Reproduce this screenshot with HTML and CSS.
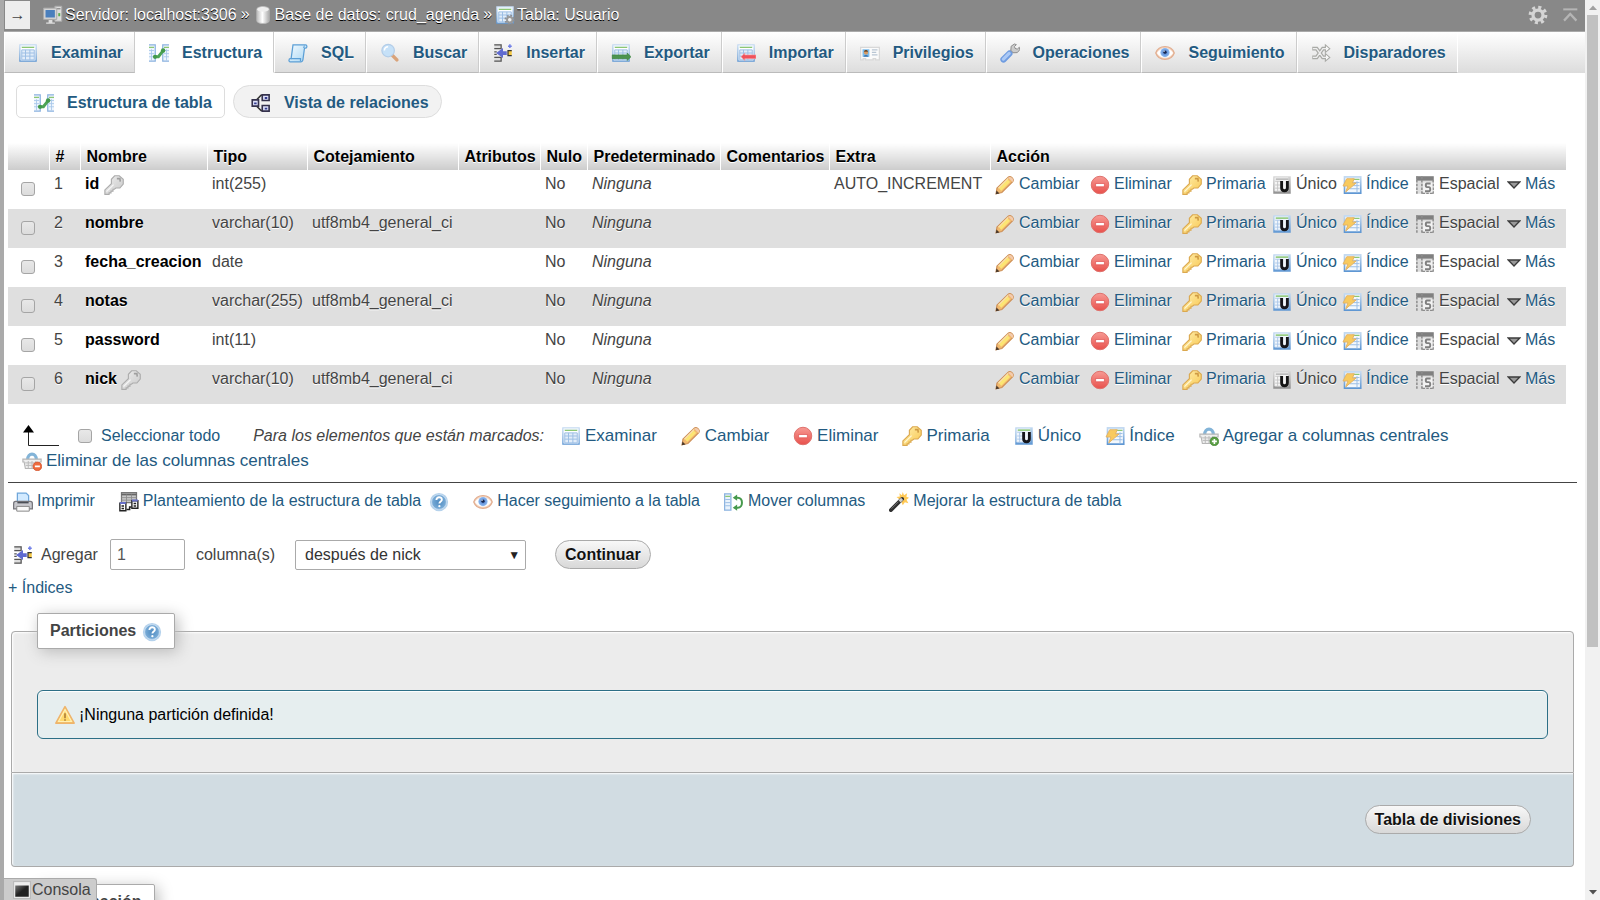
FILE: index.html
```html
<!DOCTYPE html>
<html lang="es">
<head>
<meta charset="utf-8">
<title>localhost / crud_agenda / Usuario</title>
<link rel="stylesheet" href="styles.css">
</head>
<body>
<svg class="sprite" aria-hidden="true">
  <defs>
    <linearGradient id="g-blue" x1="0" y1="0" x2="0" y2="1"><stop offset="0" stop-color="#c4daf1"/><stop offset="1" stop-color="#5f97d3"/></linearGradient>
    <linearGradient id="g-key" x1="0" y1="0" x2="1" y2="1"><stop offset="0" stop-color="#fff0b0"/><stop offset="1" stop-color="#f8c64e"/></linearGradient>
    <linearGradient id="g-red" x1="0" y1="0" x2="0" y2="1"><stop offset="0" stop-color="#f79a94"/><stop offset="1" stop-color="#e8504b"/></linearGradient>
    <linearGradient id="g-paper" x1="0" y1="0" x2="1" y2="1"><stop offset="0" stop-color="#f4fbff"/><stop offset="1" stop-color="#a9d6f3"/></linearGradient>
    <linearGradient id="g-db" x1="0" y1="0" x2="1" y2="0"><stop offset="0" stop-color="#bbb"/><stop offset=".45" stop-color="#fff"/><stop offset="1" stop-color="#aaa"/></linearGradient>
    <radialGradient id="g-iris"><stop offset="0" stop-color="#4a78c8"/><stop offset="1" stop-color="#8fbcf3"/></radialGradient>
    <radialGradient id="g-help"><stop offset="0" stop-color="#4f8cc2"/><stop offset="1" stop-color="#7badd8"/></radialGradient>
    <linearGradient id="g-con" x1="0" y1="0" x2="1" y2="1"><stop offset="0" stop-color="#777"/><stop offset=".5" stop-color="#222"/></linearGradient>
  </defs>
  <symbol id="table" viewBox="0 0 16 16"><rect x="1.5" y="1.5" width="13" height="13" fill="#fff" stroke="url(#g-blue)"/><path d="M2 2h12v1H2z" fill="#e9f2fb"/><path d="M3 3.500h10" stroke="#8cc774"/><path d="M3 5.500h10v8H3z" fill="#e2edf9"/><path d="M3 5.500h10v8H3zM3 8h10M3 10.500h10M6 5.500v8M9.500 5.500v8" fill="none" stroke="#9dbfe5" stroke-width=".8"/></symbol>
  <symbol id="structure" viewBox="0 0 16 16"><path d="M0 1h5v14H0zM11 1h5v14h-5z" fill="#eef5fd"/><path d="M0 1.500h5M11 1.500h5M5 1v14M11 1v14M0 14.500h5M11 14.500h5" stroke="#8db4e0" fill="none"/><path d="M0 3.500h4M12 3.500h4" stroke="#8cc774"/><path d="M0 6h4M0 8.500h4M0 11h4M12 6h4M12 8.500h4M12 11h4M2 5v9M14 5v9" stroke="#a9c8ea" stroke-width=".7"/><path d="M5 11h2.500l3.500-4.500" fill="none" stroke="#4da455" stroke-width="2.400"/><circle cx="4.800" cy="11" r="1.700" fill="#439a4b"/><circle cx="11.300" cy="6" r="1.800" fill="#439a4b"/></symbol>
  <symbol id="sql" viewBox="0 0 16 16"><path d="M4 1.500h10c1.500 0 1.500 2.500 0 2.500h-.8l-1.200 9c-.1 1-.8 2-1.500 2H1.500c-1 0-1-2.500.3-2.500H2.500z" fill="url(#g-paper)" stroke="#5b9fd6"/><path d="M2.500 12.500h7.500v2" fill="none" stroke="#5b9fd6"/><path d="M12.500 4l.6-2" stroke="#5b9fd6" stroke-width=".8"/></symbol>
  <symbol id="search" viewBox="0 0 16 16"><path d="M9.500 9.500l4 4" stroke="#d9a37a" stroke-width="2.800" stroke-linecap="round"/><circle cx="6.500" cy="6" r="5" fill="#c6e1f8" stroke="#b3cde8"/><path d="M3.500 6a3.200 3.200 0 0 1 3-3" stroke="#fff" stroke-width="1.200" fill="none"/></symbol>
  <symbol id="insert" viewBox="0 0 16 16"><path d="M1 1h6v3H1zM1 12h6v3H1z" fill="#ddd"/><path d="M1 1.500h6M1 4.500h6M1 11.500h6M1 14.500h6M6.500 1v3M6.500 12v3M1 7h2M1 9h2" stroke="#555"/><path d="M8 4v2.500h3v3H8V12L2.500 8z" fill="#5f6ad0"/><path d="M15 6h-3v4h3" fill="#f5c842" stroke="#333"/><path d="M13.500 1v3M12 2.500h3" stroke="#7180e8" stroke-width="1.200"/></symbol>
  <symbol id="export" viewBox="0 0 16 16"><use href="#table"/><path d="M1 9.500h12V8l3 3-3 3v-1.500H1z" fill="#4b9450" stroke="#39803f" stroke-width=".5"/></symbol>
  <symbol id="import" viewBox="0 0 16 16"><use href="#table"/><path d="M16 9.500H7V8l-3 3 3 3v-1.500h9z" fill="#f0525b" stroke="#f7a0a3" stroke-width=".5"/></symbol>
  <symbol id="card" viewBox="0 0 16 16"><path d="M.5 3.500h15v10h-3v-1h-2v1h-6v-1h-2v1h-2z" fill="#fbfbfb" stroke="#d8d8d8"/><path d="M2 5h5.500v6H2z" fill="#7dbdec"/><path d="M2.800 11c0-2 3.900-2 3.900 0z" fill="#3c78b5"/><circle cx="4.800" cy="7.600" r="1.700" fill="#d79a62"/><path d="M3.200 7c0-2 3.200-2 3.200 0z" fill="#6b4a2c"/><path d="M9.500 5.500h4.500M9.500 7.500h3.500M9.500 9.500h4.500" stroke="#b9c6d4" stroke-width=".9"/></symbol>
  <symbol id="wrench" viewBox="0 0 16 16"><path d="M7.500 8.500l3-3" stroke="#a5a5a5" stroke-width="3"/><path d="M11.500.8l-2.600 1.800-.2 3.200 1.700 2 3.400-.1 2-2.300-.3-2-1.700 1.500-1.800-.6-.4-1.500 1.500-1.500z" fill="#ccc" stroke="#8f8f8f" stroke-width=".8"/><path d="M2.800 13.200l4.700-4.700" stroke="#6f9ce0" stroke-width="5" stroke-linecap="round"/><path d="M2.700 12.900l4.600-4.600" stroke="#abc9f5" stroke-width="2.600" stroke-linecap="round"/></symbol>
  <symbol id="eye" viewBox="0 0 16 16"><path d="M.6 8C3 1.200 13 1.200 15.400 8 13 14.800 3 14.800.6 8z" fill="#f5d7c3" stroke="#e2ae90"/><path d="M1.500 8c3-5 10-5 13 0-3 5-10 5-13 0z" fill="#fff"/><circle cx="8" cy="7.600" r="3.700" fill="url(#g-iris)"/><circle cx="8" cy="7.300" r="1.300" fill="#162650"/><circle cx="7.300" cy="6.500" r=".5" fill="#fff"/></symbol>
  <symbol id="shuffle" viewBox="0 0 16 16"><path d="M1 4.500h3.500l5 7H13M1 11.500h3.500l5-7H13" fill="none" stroke="#a9aaa6" stroke-width="3"/><path d="M11.500 1.500L15 4.500l-3.500 3zM11.500 8.500l3.500 3-3.500 3z" fill="#fff" stroke="#a9aaa6" stroke-width=".9"/><path d="M1.500 4.500h3l5 7H13M1.500 11.500h3l5-7H13" fill="none" stroke="#eee" stroke-width="1.100"/></symbol>
  <symbol id="relations" viewBox="0 0 16 16"><path d="M4 6L8 1.800h2M4 10l4 4h2" stroke="#333" stroke-width="1.300" fill="none"/><g fill="#dfe2fb" stroke="#35324d" stroke-width="1.300"><path d="M1 5.500h5v5H1zM9 1.500h5.500v4.500H9zM9 10h5.500v4.500H9z"/></g><path d="M2.500 7.500h2V9h-2zM11 3.200h2v1.500h-2zM11 11.700h2v1.500h-2z" fill="#333b8c"/></symbol>
  <symbol id="key" viewBox="0 0 16 16"><path d="M8.500.6h3.700l3.200 2.800v3.800l-2.700 3.200H9.500l-1.200 1H7.200v1.500H5.600v1.400H4.100v1.200H.7v-3.600L5.900 7V3.400z" fill="url(#g-key)" stroke="#dba84f" stroke-width=".9"/><path d="M10.300 2.900l2.400-.1.300 2.500" fill="none" stroke="#cf9a43" stroke-width="1.300"/><path d="M2 13.300l5.700-5.600" stroke="#fff8d9" stroke-width=".9"/></symbol>
  <symbol id="pencil" viewBox="0 0 16 16"><path d="M.8 15l.8-4.500L10.600 1.700c1.700-1.500 5.200 1.500 3.600 3.600L5.500 14z" fill="#f2b96f" stroke="#cd9059" stroke-width=".9"/><path d="M4 11.500l7-7" stroke="#fce574" stroke-width="3"/><path d="M2.700 10.500l7.800-7.800" stroke="#fae3b5" stroke-width=".9"/><path d="M10.500 2l3.500 3.500c2-1.800-1.500-5.200-3.500-3.500z" fill="#f3cbae"/><path d="M.6 15.300l.6-3 2.400 2.400z" fill="#4b3a2c"/></symbol>
  <symbol id="drop" viewBox="0 0 16 16"><circle cx="8" cy="8" r="7" fill="url(#g-red)" stroke="#df716c" stroke-width=".8"/><path d="M4.500 6.800h7v2.600h-7z" fill="#fff" stroke="#d44" stroke-width=".5"/></symbol>
  <symbol id="unique" viewBox="0 0 16 16"><path d="M1 1h14v14H1z" fill="url(#g-blue)"/><path d="M2 2h11v11H2z" fill="#f0f6fc"/><path d="M3 3.300h10" stroke="#8cc774" stroke-width="1.200"/><path d="M2.500 5h5v8h-5M4.500 5v8M2.500 8h5M2.500 10.500h5" stroke="#a9c6e8" stroke-width=".7" fill="none"/><path d="M7.700 4.800v5.400c0 3.200 4.600 3.200 4.600 0V4.800" fill="none" stroke="#15151b" stroke-width="2.300"/></symbol>
  <symbol id="index" viewBox="0 0 16 16"><path d="M2 1.500h13v13H2z" fill="#f3f8fd" stroke="url(#g-blue)" stroke-width="1.300"/><path d="M8 3.500h6" stroke="#8cc774"/><path d="M9 6h5M8 8.500h6M6 11h8M12 5v9" stroke="#9dbfe5" stroke-width=".8"/><path d="M3.800 3l6 0-1.500 3.400h3L3 13.500l1.700-4.700H.8z" fill="#f8ca5e" stroke="#e4b467" stroke-width=".8"/></symbol>
  <symbol id="spatial" viewBox="0 0 16 16"><path d="M1 1h14v14H1z" fill="#ddd"/><path d="M1 1h14v3.500H1z" fill="#808080"/><path d="M1.500 1v14M5.500 1v14M14.500 4v11M6 14.500h9" stroke="#8c8c8c" stroke-width="1.200" stroke-dasharray="2 1"/><path d="M6.500 6h7.500v8H6.500z" fill="#f3f3f3"/><path d="M12.500 6.800H9.500c-1.200 0-1.200 2.900 0 2.900h1.500c1.600 0 1.600 3.300 0 3.300H8" fill="none" stroke="#808080" stroke-width="1.500"/></symbol>
  <symbol id="more" viewBox="0 0 14 16"><path d="M1.200 5h11.600L7 11z" fill="#999" stroke="#3c3c3c" stroke-width="1.300"/></symbol>
  <symbol id="basket" viewBox="0 0 16 16"><path d="M4.500 7C4.500 1 11.500 1 11.500 7" fill="none" stroke="#83b4d8" stroke-width="2.600"/><path d="M.7 6.500h14.600v2.300h-1l-1 5.200H2.700l-1-5.200h-1z" fill="#eee" stroke="#b5b5b5" stroke-width=".9"/><path d="M2.500 9.500h11M3 11.500h10M5 8v6M8 8v6M11 8v6" stroke="#bbb" stroke-width=".8"/></symbol>
  <symbol id="basket-add" viewBox="0 0 16 16"><use href="#basket"/><circle cx="12.300" cy="12.300" r="3.500" fill="#5a9e43" stroke="#3f8130" stroke-width=".5"/><path d="M12.300 10.300v4M10.300 12.300h4" stroke="#fff" stroke-width="1.300"/></symbol>
  <symbol id="basket-del" viewBox="0 0 16 16"><use href="#basket"/><circle cx="12.300" cy="12.300" r="3.500" fill="#ee6a3c" stroke="#cb4a23" stroke-width=".5"/><path d="M10.300 12.300h4" stroke="#fff" stroke-width="1.400"/></symbol>
  <symbol id="print" viewBox="0 0 16 16"><path d="M3.500 8V.8h7l2 2V8z" fill="#d2eaff" stroke="#6fa6da"/><path d="M2 7.500h12c1 0 1.500.8 1.500 1.800v4.200H.5V9.300c0-1 .5-1.800 1.500-1.800z" fill="#c9c9ce" stroke="#77777d"/><path d="M3.500 8.500h9" stroke="#4b4f57" stroke-width="1.200"/><path d="M3 11.500h10v3.800H3z" fill="#fafafa" stroke="#888" stroke-width=".8"/></symbol>
  <symbol id="propose" viewBox="0 0 16 16"><path d="M2 .5h12v8H2z" fill="#c8c8c8" stroke="#777"/><path d="M2 2h12" stroke="#666" stroke-width="1.400"/><path d="M2 4.500h12M2 6.500h12M6 2v6M10 2v6" stroke="#8b8b8b" stroke-width=".7"/><path d="M.7 9h4.800v6H.7zM10.300 7h4.800v6h-4.800z" fill="#fff" stroke="#222" stroke-width="1.100"/><path d="M.7 8.800h4.800M10.300 6.800h4.800" stroke="#6870c9" stroke-width="1.600"/><path d="M2 11.200h2M2 13.200h2M11.700 9.200h2M11.700 11.200h2M6 14h2.500v-2H10" stroke="#222" stroke-width="1.200" fill="none"/></symbol>
  <symbol id="help" viewBox="0 0 16 16"><circle cx="8" cy="8" r="7.300" fill="#b5d2ec"/><circle cx="8" cy="8" r="5.900" fill="url(#g-help)" stroke="#d5e6f5" stroke-width=".5"/><path d="M5.900 6.300c0-2.900 4.400-2.700 4.400-.2 0 1.400-2 1.500-2 3.100" fill="none" stroke="#fff" stroke-width="1.500"/><circle cx="8.300" cy="11.300" r=".9" fill="#fff"/></symbol>
  <symbol id="move" viewBox="0 0 16 16"><path d="M0 1h6v14H0z" fill="#eaf3fc"/><path d="M0 1.500h6M5.500 1v14M0 14.500h6M.5 1v14" stroke="#8db4e0"/><path d="M1 3.500h4" stroke="#8cc774"/><path d="M1 6h4M1 8.500h4M1 11h4" stroke="#9dbfe5" stroke-width=".8"/><path d="M9.500 4.500H11c4.500 0 4.500 8 0 8H9.500" fill="none" stroke="#46994c" stroke-width="1.600"/><path d="M10.500 2v5L7 4.500zM10.500 10v5L7 12.500z" fill="#46994c"/></symbol>
  <symbol id="wand" viewBox="0 0 16 16"><path d="M11 0l1 2.600L14.500 1l-.6 2.800 2.100.8-2 1.500L15.500 9l-2.800-.8L11 10.500l-.9-2.400L7 8.500l1.200-2.700L6 4l2.700-.4L8.300 1l2 1.500z" fill="#ffc956"/><path d="M1.500 14.500L10.500 5.500" stroke="#303030" stroke-width="3" stroke-linecap="round"/><path d="M8.500 7.500l2-2" stroke="#ccc" stroke-width="2.400"/><path d="M2 13.300l5.500-5.500" stroke="#888" stroke-width=".6"/></symbol>
  <symbol id="server" viewBox="0 0 16 16"><path d="M9.500 1h5.500v12H9.500z" fill="#ddd" stroke="#aaa" stroke-width=".8"/><path d="M10.500 3h3.500" stroke="#888"/><path d="M13 6.500v2.500" stroke="#5cad51" stroke-width="1.600"/><path d="M.5 2.500h10.500v9H.5z" fill="#d5d5d5" stroke="#aaa" stroke-width=".8"/><path d="M2 4h7.500v6H2z" fill="#4a7fbd"/><path d="M4.500 12h3v2h2v1H2.500v-1h2z" fill="#ddd"/></symbol>
  <symbol id="db" viewBox="0 0 16 16"><path d="M3 3.500c0-3 10-3 10 0v9c0 3-10 3-10 0z" fill="url(#g-db)" stroke="#bbb" stroke-width=".6"/><ellipse cx="8" cy="3.500" rx="4.700" ry="1.800" fill="#eee"/></symbol>
  <symbol id="table-gear" viewBox="0 0 16 16"><use href="#table"/><circle cx="11.800" cy="11.800" r="3.400" fill="none" stroke="#8a8f96" stroke-width="1.600" stroke-dasharray="1.335 1.335"/><circle cx="11.800" cy="11.800" r="2.200" fill="#eee" stroke="#999" stroke-width="1.500"/></symbol>
  <symbol id="gear" viewBox="0 0 16 16"><circle cx="8" cy="8" r="6.200" fill="none" stroke="#d4d4d4" stroke-width="2.600" stroke-dasharray="2.435 2.435"/><circle cx="8" cy="8" r="4" fill="none" stroke="#d4d4d4" stroke-width="2.600"/></symbol>
  <symbol id="top" viewBox="0 0 16 16"><path d="M2 3h12.500" stroke="#b5b5b5" stroke-width="1.800"/><path d="M2.700 13L8.200 7l5.500 6" fill="none" stroke="#b5b5b5" stroke-width="2"/></symbol>
  <symbol id="warn" viewBox="0 0 16 16"><path d="M8 1.300L15.300 14.500H.7z" fill="#ffd96e" stroke="#eeb46c" stroke-width="1.300" stroke-linejoin="round"/><path d="M8 3.700l5.200 9.500H2.800z" fill="none" stroke="#fff0b5" stroke-width=".9"/><path d="M8 6.500v4M8 11.300v1.300" stroke="#b98a40" stroke-width="1.500"/></symbol>
  <symbol id="console" viewBox="0 0 16 16"><rect x=".5" y=".5" width="15" height="15" fill="#eee" stroke="#bbb"/><path d="M2 4h12v10H2z" fill="url(#g-con)"/></symbol>
  <symbol id="arrow" viewBox="0 0 38 22"><path d="M6.500 5v15.500H37" fill="none" stroke="#222"/><path d="M6.500 0L12 7.500H1z" fill="#000"/></symbol>
</svg>

<div class="app">
  <div class="splitter"></div>
  <main class="main">
    <header class="topbar">
      <button class="collapse" type="button" aria-label="Mostrar panel">→</button>
      <nav class="crumbs" aria-label="Ruta">
        <a href="#"><svg class="icon"><use href="#server"/></svg>Servidor: localhost:3306</a><span>»</span>
        <a href="#"><svg class="icon"><use href="#db"/></svg>Base de datos: crud_agenda</a><span>»</span>
        <a href="#"><svg class="icon"><use href="#table-gear"/></svg>Tabla: Usuario</a>
      </nav>
      <button class="tool" type="button" aria-label="Opciones"><svg class="icon"><use href="#gear"/></svg></button>
      <button class="tool" type="button" aria-label="Subir"><svg class="icon small"><use href="#top"/></svg></button>
    </header>

    <nav class="tabs" aria-label="Tabla">
      <a href="#"><svg class="icon"><use href="#table"/></svg>Examinar</a>
      <a href="#" class="active"><svg class="icon"><use href="#structure"/></svg>Estructura</a>
      <a href="#"><svg class="icon"><use href="#sql"/></svg>SQL</a>
      <a href="#"><svg class="icon"><use href="#search"/></svg>Buscar</a>
      <a href="#"><svg class="icon"><use href="#insert"/></svg>Insertar</a>
      <a href="#"><svg class="icon"><use href="#export"/></svg>Exportar</a>
      <a href="#"><svg class="icon"><use href="#import"/></svg>Importar</a>
      <a href="#"><svg class="icon"><use href="#card"/></svg>Privilegios</a>
      <a href="#"><svg class="icon"><use href="#wrench"/></svg>Operaciones</a>
      <a href="#"><svg class="icon"><use href="#eye"/></svg>Seguimiento</a>
      <a href="#"><svg class="icon"><use href="#shuffle"/></svg>Disparadores</a>
    </nav>

    <div class="content">
      <nav class="subtabs" aria-label="Vistas">
        <a href="#" class="active"><svg class="icon"><use href="#structure"/></svg>Estructura de tabla</a>
        <a href="#"><svg class="icon"><use href="#relations"/></svg>Vista de relaciones</a>
      </nav>

      <table class="columns">
        <colgroup><col class="c-check"><col class="c-num"><col class="c-name"><col class="c-type"><col class="c-coll"><col class="c-attr"><col class="c-null"><col class="c-def"><col class="c-com"><col class="c-extra"><col></colgroup>
        <thead>
          <tr><th></th><th>#</th><th>Nombre</th><th>Tipo</th><th>Cotejamiento</th><th>Atributos</th><th>Nulo</th><th>Predeterminado</th><th>Comentarios</th><th>Extra</th><th>Acción</th></tr>
        </thead>
        <tbody>
          <tr><td><input type="checkbox" aria-label="id"></td><td>1</td><td><b>id <svg class="icon gray"><use href="#key"/></svg></b></td><td>int(255)</td><td></td><td></td><td>No</td><td><i>Ninguna</i></td><td></td><td>AUTO_INCREMENT</td>
            <td><div class="actions"><a href="#"><svg class="icon"><use href="#pencil"/></svg>Cambiar</a><a href="#"><svg class="icon"><use href="#drop"/></svg>Eliminar</a><a href="#"><svg class="icon"><use href="#key"/></svg>Primaria</a><span><svg class="icon gray"><use href="#unique"/></svg>Único</span><a href="#"><svg class="icon"><use href="#index"/></svg>Índice</a><span><svg class="icon"><use href="#spatial"/></svg>Espacial</span><a href="#"><svg class="icon caret"><use href="#more"/></svg>Más</a></div></td></tr>
          <tr><td><input type="checkbox" aria-label="nombre"></td><td>2</td><td><b>nombre</b></td><td>varchar(10)</td><td>utf8mb4_general_ci</td><td></td><td>No</td><td><i>Ninguna</i></td><td></td><td></td>
            <td><div class="actions"><a href="#"><svg class="icon"><use href="#pencil"/></svg>Cambiar</a><a href="#"><svg class="icon"><use href="#drop"/></svg>Eliminar</a><a href="#"><svg class="icon"><use href="#key"/></svg>Primaria</a><a href="#"><svg class="icon"><use href="#unique"/></svg>Único</a><a href="#"><svg class="icon"><use href="#index"/></svg>Índice</a><span><svg class="icon"><use href="#spatial"/></svg>Espacial</span><a href="#"><svg class="icon caret"><use href="#more"/></svg>Más</a></div></td></tr>
          <tr><td><input type="checkbox" aria-label="fecha_creacion"></td><td>3</td><td><b>fecha_creacion</b></td><td>date</td><td></td><td></td><td>No</td><td><i>Ninguna</i></td><td></td><td></td>
            <td><div class="actions"><a href="#"><svg class="icon"><use href="#pencil"/></svg>Cambiar</a><a href="#"><svg class="icon"><use href="#drop"/></svg>Eliminar</a><a href="#"><svg class="icon"><use href="#key"/></svg>Primaria</a><a href="#"><svg class="icon"><use href="#unique"/></svg>Único</a><a href="#"><svg class="icon"><use href="#index"/></svg>Índice</a><span><svg class="icon"><use href="#spatial"/></svg>Espacial</span><a href="#"><svg class="icon caret"><use href="#more"/></svg>Más</a></div></td></tr>
          <tr><td><input type="checkbox" aria-label="notas"></td><td>4</td><td><b>notas</b></td><td>varchar(255)</td><td>utf8mb4_general_ci</td><td></td><td>No</td><td><i>Ninguna</i></td><td></td><td></td>
            <td><div class="actions"><a href="#"><svg class="icon"><use href="#pencil"/></svg>Cambiar</a><a href="#"><svg class="icon"><use href="#drop"/></svg>Eliminar</a><a href="#"><svg class="icon"><use href="#key"/></svg>Primaria</a><a href="#"><svg class="icon"><use href="#unique"/></svg>Único</a><a href="#"><svg class="icon"><use href="#index"/></svg>Índice</a><span><svg class="icon"><use href="#spatial"/></svg>Espacial</span><a href="#"><svg class="icon caret"><use href="#more"/></svg>Más</a></div></td></tr>
          <tr><td><input type="checkbox" aria-label="password"></td><td>5</td><td><b>password</b></td><td>int(11)</td><td></td><td></td><td>No</td><td><i>Ninguna</i></td><td></td><td></td>
            <td><div class="actions"><a href="#"><svg class="icon"><use href="#pencil"/></svg>Cambiar</a><a href="#"><svg class="icon"><use href="#drop"/></svg>Eliminar</a><a href="#"><svg class="icon"><use href="#key"/></svg>Primaria</a><a href="#"><svg class="icon"><use href="#unique"/></svg>Único</a><a href="#"><svg class="icon"><use href="#index"/></svg>Índice</a><span><svg class="icon"><use href="#spatial"/></svg>Espacial</span><a href="#"><svg class="icon caret"><use href="#more"/></svg>Más</a></div></td></tr>
          <tr><td><input type="checkbox" aria-label="nick"></td><td>6</td><td><b>nick <svg class="icon gray"><use href="#key"/></svg></b></td><td>varchar(10)</td><td>utf8mb4_general_ci</td><td></td><td>No</td><td><i>Ninguna</i></td><td></td><td></td>
            <td><div class="actions"><a href="#"><svg class="icon"><use href="#pencil"/></svg>Cambiar</a><a href="#"><svg class="icon"><use href="#drop"/></svg>Eliminar</a><a href="#"><svg class="icon"><use href="#key"/></svg>Primaria</a><span><svg class="icon gray"><use href="#unique"/></svg>Único</span><a href="#"><svg class="icon"><use href="#index"/></svg>Índice</a><span><svg class="icon"><use href="#spatial"/></svg>Espacial</span><a href="#"><svg class="icon caret"><use href="#more"/></svg>Más</a></div></td></tr>
        </tbody>
      </table>

      <div class="bulk">
        <div class="bulk-select">
          <svg class="up-arrow"><use href="#arrow"/></svg>
          <input type="checkbox" id="all"><label for="all">Seleccionar todo</label>
          <i>Para los elementos que están marcados:</i>
        </div>
        <button type="button"><svg class="icon"><use href="#table"/></svg>Examinar</button>
        <button type="button"><svg class="icon"><use href="#pencil"/></svg>Cambiar</button>
        <button type="button"><svg class="icon"><use href="#drop"/></svg>Eliminar</button>
        <button type="button"><svg class="icon"><use href="#key"/></svg>Primaria</button>
        <button type="button"><svg class="icon"><use href="#unique"/></svg>Único</button>
        <button type="button"><svg class="icon"><use href="#index"/></svg>Índice</button>
        <button type="button"><svg class="icon"><use href="#basket-add"/></svg>Agregar a columnas centrales</button>
        <button type="button"><svg class="icon"><use href="#basket-del"/></svg>Eliminar de las columnas centrales</button>
      </div>

      <div class="links">
        <a href="#"><svg class="icon"><use href="#print"/></svg>Imprimir</a>
        <div class="with-help"><a href="#"><svg class="icon"><use href="#propose"/></svg>Planteamiento de la estructura de tabla</a><a href="#" aria-label="Documentación"><svg class="icon"><use href="#help"/></svg></a></div>
        <a href="#"><svg class="icon"><use href="#eye"/></svg>Hacer seguimiento a la tabla</a>
        <a href="#"><svg class="icon"><use href="#move"/></svg>Mover columnas</a>
        <a href="#"><svg class="icon"><use href="#wand"/></svg>Mejorar la estructura de tabla</a>
      </div>

      <form class="add">
        <svg class="icon"><use href="#insert"/></svg>
        <label for="num">Agregar</label>
        <input class="num" id="num" type="text" value="1">
        <label for="where">columna(s)</label>
        <div class="select"><select id="where"><option>después de nick</option></select></div>
        <button class="btn" type="button">Continuar</button>
      </form>

      <a class="indexes" href="#">+ Índices</a>

      <section class="panel">
        <fieldset>
          <legend>Particiones <a href="#" aria-label="Documentación"><svg class="icon"><use href="#help"/></svg></a></legend>
          <div class="notice"><svg class="icon"><use href="#warn"/></svg>¡Ninguna partición definida!</div>
        </fieldset>
        <div class="panel-foot"><button class="btn" type="button">Tabla de divisiones</button></div>
      </section>

      <section class="panel">
        <fieldset>
          <legend>Información</legend>
        </fieldset>
      </section>
    </div>
    <button class="console" type="button"><svg class="icon small"><use href="#console"/></svg>Consola</button>
  </main>
  <div class="scrollbar" aria-hidden="true">
    <svg viewBox="0 0 15 15"><path d="M4 10h8L8 5.500z" fill="#a0a0a0"/></svg>
    <div class="track"><div class="thumb"></div></div>
    <svg viewBox="0 0 15 15"><path d="M4 5h8L8 9.500z" fill="#505050"/></svg>
  </div>
</div>
</body>
</html>
```

FILE: styles.css
```css
* { box-sizing: border-box; }

body {
  margin: 0;
  font: 16px/18px "Liberation Sans", Arial, sans-serif;
  color: #444;
  background: #fff;
}

a { color: #235a81; text-decoration: none; }
button { font: inherit; color: inherit; cursor: pointer; }
.sprite { position: absolute; width: 0; height: 0; }
.icon { width: 20px; height: 20px; flex: none; }
.icon.small { width: 18px; height: 18px; }
.icon.caret { width: 14px; }
.icon.gray { filter: grayscale(1); }

.app { display: flex; height: 100vh; overflow: hidden; }
.splitter { width: 4px; background: #aaa; }
.main { flex: 1; min-width: 0; overflow: hidden; position: relative; }

/* Top bar */
.topbar {
  display: flex;
  align-items: center;
  height: 32px;
  padding: 0 6px 2px 1px;
  background: #888;
  border-bottom: 1px solid #aaa;
}
.collapse {
  width: 25px;
  height: 28px;
  padding: 0;
  border: 0;
  background: #eee;
}
.crumbs {
  display: flex;
  flex: 1;
  gap: 4px;
  padding-left: 13px;
  color: #fff;
  text-shadow: 0 1px 0 #000;
}
.crumbs a { display: flex; align-items: center; gap: 2px; color: #fff; }
.crumbs span { margin-right: -1px; }
.tool { display: flex; padding: 0 0 0 13px; border: 0; background: none; }

/* Tabs */
.tabs {
  display: flex;
  height: 41px;
  background: linear-gradient(#fff, #dcdcdc);
}
.tabs a {
  display: flex;
  align-items: center;
  gap: 13px;
  padding: 1px 11px 0 13px;
  border-left: 1px solid #fff;
  border-right: 1px solid #ccc;
  border-bottom: 1px solid #bbb;
  font-weight: bold;
  text-shadow: 0 1px 0 #fff;
}
.tabs a:last-child { border-right-color: #fff; }
.tabs a.active { background: #fff; border-color: #fff #ccc #fff #fff; }

.content { padding: 0 8px 0 4px; }

.subtabs { display: flex; gap: 8px; padding: 12px 8px 25px; }
.subtabs a {
  display: flex;
  align-items: center;
  gap: 13px;
  height: 33px;
  padding: 2px 12px 0 17px;
  border: 1px solid #ddd;
  border-radius: 17px;
  background: #f2f2f2;
  font-weight: bold;
}
.subtabs a.active { border-radius: 5px; background: #fff; }

/* Column list */
.columns {
  table-layout: fixed;
  width: calc(100% - 11px);
  border-collapse: collapse;
  white-space: nowrap;
}
.c-check { width: 41px; }
.c-num { width: 31px; }
.c-name { width: 127px; }
.c-type { width: 100px; }
.c-coll { width: 151px; }
.c-attr { width: 82px; }
.c-null { width: 47px; }
.c-def { width: 133px; }
.c-com { width: 109px; }
.c-extra { width: 161px; }

.columns th {
  height: 27px;
  padding: 1px 4px 0 6px;
  border-right: 1px solid #fff;
  background: linear-gradient(#fff, #ccc);
  color: #000;
  text-align: left;
  text-shadow: 0 1px 0 #fff;
}
.columns th:last-child { border-right: 0; }
.columns td {
  height: 39px;
  padding: 5px 5px 0;
  vertical-align: top;
  text-shadow: 0 1px 0 #fff;
}
.columns td .icon { vertical-align: top; }
.columns tbody tr:nth-child(even) { background: #dfdfdf; }
.columns b { color: #000; }
.columns input { display: block; margin: 7px 0 0 8px; }

input[type="checkbox"] {
  appearance: none;
  width: 14px;
  height: 14px;
  border: 1px solid #a5a5a5;
  border-radius: 3px;
  background: linear-gradient(#e8e8e8, #dcdcdc);
}

.actions {
  display: grid;
  grid-template-columns: 95px 92px 90px 70px 73px 92px auto;
}
.actions > * { display: flex; gap: 4px; }

/* Bulk actions */
.bulk {
  display: flex;
  flex-wrap: wrap;
  column-gap: 24px;
  padding: 19px 0 9px 14px;
  border-bottom: 1px solid #444;
}
.bulk-select { display: flex; align-items: center; height: 25px; margin-right: -7px; }
.up-arrow { width: 38px; height: 22px; }
.bulk-select input { margin: 0 9px 0 18px; }
.bulk-select label { margin-right: 33px; color: #235a81; }
.bulk button {
  display: flex;
  align-items: center;
  gap: 4px;
  height: 25px;
  padding: 0;
  border: 0;
  background: none;
  color: #235a81;
  font-size: 17px;
}

.links { display: flex; flex-wrap: wrap; gap: 0 24px; padding: 9px 5px 0; }
.links a { display: flex; gap: 4px; }
.with-help { display: flex; gap: 8px; }

/* Add columns */
.add { display: flex; align-items: center; padding: 27px 5px 9px; }
.add label { margin: 0 11px 0 8px; }
.add .num {
  width: 75px;
  height: 31px;
  padding: 0 6px;
  border: 1px solid #aaa;
  border-radius: 2px;
  color: #555;
  font: inherit;
}
.add label[for="num"] { margin-right: 12px; }
.add label[for="where"] { margin: 0 20px 0 11px; }
.select { position: relative; width: 231px; }
.select::after {
  content: "▼";
  position: absolute;
  top: 6px;
  right: 6px;
  color: #222;
  font-size: 12px;
  pointer-events: none;
}
.select select {
  appearance: none;
  width: 100%;
  height: 30px;
  padding: 0 9px;
  border: 1px solid #aaa;
  border-radius: 2px;
  background: #fff;
  color: #333;
  font: inherit;
}
.btn {
  height: 29px;
  padding: 0 9px;
  border: 1px solid #aaa;
  border-radius: 15px;
  background: linear-gradient(#f8f8f8, #d8d8d8);
  color: #111;
  font-weight: bold;
  text-shadow: 0 1px 0 #fff;
}
.add .btn { margin-left: 29px; }
.indexes { display: block; }

/* Panels */
.panel { margin: 16px 3px 17px; }
.panel fieldset {
  min-height: 159px;
  margin: 0;
  padding: 41px 25px 33px;
  border: 1px solid #aaa;
  border-radius: 4px 4px 0 0;
  background: #ececec;
  box-shadow: inset 1px 1px 2px #fff;
}
.panel legend {
  height: 36px;
  padding: 8px 12px;
  border: 1px solid #aaa;
  border-radius: 2px;
  background: #fff;
  box-shadow: 3px 3px 15px #bbb;
  font-weight: bold;
}
.panel legend .icon { margin-left: 1px; vertical-align: top; }
.notice {
  display: flex;
  align-items: center;
  gap: 4px;
  height: 49px;
  padding: 0 17px;
  border: 1px solid #2c6f86;
  border-radius: 6px;
  background: #e6eeef;
  box-shadow: inset 0 1px 1px #fff;
  color: #000;
}
.panel-foot {
  display: flex;
  justify-content: flex-end;
  padding: 32px 42px;
  border: 1px solid #aaa;
  border-top: 0;
  border-radius: 0 0 4px 4px;
  background: #d1dce2;
  box-shadow: inset 1px 1px 2px #fff;
}

.console {
  position: absolute;
  left: 0;
  bottom: 0;
  display: flex;
  align-items: center;
  gap: 1px;
  height: 22px;
  padding: 0 5px 0 9px;
  border: 1px solid #aaa;
  border-width: 1px 1px 0 0;
  border-radius: 0 3px 0 0;
  background: #ccc;
}

/* Scrollbar */
.scrollbar { display: flex; flex-direction: column; width: 15px; background: #f1f1f1; }
.scrollbar svg { width: 15px; height: 15px; }
.track { display: flex; flex: 1; flex-direction: column; padding: 0 2px; }
.thumb { flex: none; height: 72.6%; background: #c1c1c1; }
```
